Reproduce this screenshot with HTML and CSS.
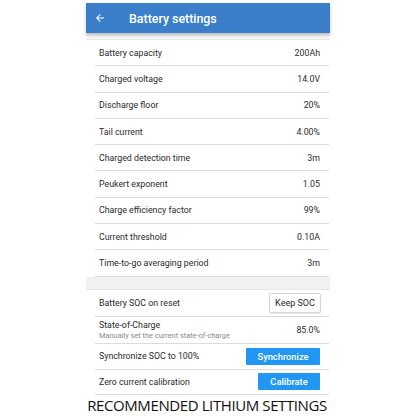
FILE: index.html
```html
<!DOCTYPE html>
<html>
<head>
<meta charset="utf-8">
<link rel="stylesheet" href="styles.css">
</head>
<body>
<div class="phone">
  <header class="appbar">
    <svg class="back" width="12" height="12" viewBox="0 0 24 24"><path d="M20 11H7.83l5.59-5.59L12 4l-8 8 8 8 1.41-1.41L7.83 13H20v-2z" fill="#fff"/></svg>
    <span class="title">Battery settings</span>
  </header>
  <div class="gap-top"></div>
  <div class="list">
    <div class="row"><span>Battery capacity</span><span>200Ah</span></div>
    <div class="row"><span>Charged voltage</span><span>14.0V</span></div>
    <div class="row"><span>Discharge floor</span><span>20%</span></div>
    <div class="row"><span>Tail current</span><span>4.00%</span></div>
    <div class="row"><span>Charged detection time</span><span>3m</span></div>
    <div class="row"><span>Peukert exponent</span><span>1.05</span></div>
    <div class="row"><span>Charge efficiency factor</span><span>99%</span></div>
    <div class="row"><span>Current threshold</span><span>0.10A</span></div>
    <div class="row"><span>Time-to-go averaging period</span><span>3m</span></div>
  </div>
  <div class="band"></div>
  <div class="list">
    <div class="row r-soc"><span>Battery SOC on reset</span><span class="btn-outline">Keep SOC</span></div>
    <div class="row r-state">
      <div class="two"><span>State-of-Charge</span><span class="sub">Manually set the current state-of-charge</span></div>
      <span>85.0%</span>
    </div>
    <div class="row r-sync"><span>Synchronize SOC to 100%</span><span class="btn-blue sync">Synchronize</span></div>
    <div class="row r-cal"><span>Zero current calibration</span><span class="btn-blue cal">Calibrate</span></div>
  </div>
</div>
<div class="caption">RECOMMENDED LITHIUM SETTINGS</div>
</body>
</html>
```
FILE: styles.css
```css
* { box-sizing: border-box; }
body {
  margin: 0;
  background: #fff;
  font-family: Roboto, "Noto Sans", sans-serif;
  color: #2a2a2a;
}
.phone {
  width: 244px;
  margin-left: 86px;
  margin-top: 3px;
}
.appbar {
  height: 30px;
  background: #3b7fca;
  display: flex;
  align-items: center;
  padding-left: 8px;
  box-shadow: 0 2px 3px rgba(0,0,0,0.25);
  position: relative;
}
.back { margin-right: 23px; }
.title {
  color: #fff;
  font-size: 12.4px;
  font-weight: 500;
}
.gap-top {
  height: 7px;
  background: #f6f6f6;
  border-bottom: 1px solid #e8e8e8;
}
.list { display: flex; flex-direction: column; }
.row {
  margin: 0 1px 0 9px;
  height: 26.3px;
  border-bottom: 1px solid #dcdcdc;
  display: flex;
  align-items: center;
  justify-content: space-between;
  padding: 0 9px 0 4px;
  font-size: 8.8px;
}
.band {
  height: 13px;
  background: #f1f1f1;
  border-bottom: 1px solid #e6e6e6;
}
.r-soc { height: 27px; }
.r-state { height: 27px; }
.r-sync { height: 26px; }
.r-cal { height: 25.5px; }
.two { display: flex; flex-direction: column; }
.sub { font-size: 7.4px; color: #8a8a8a; margin-top: 1px; }
.btn-outline {
  width: 52px;
  height: 20px;
  border: 1px solid #d6d6d6;
  border-radius: 2px;
  box-shadow: 0 1px 1px rgba(0,0,0,0.12);
  display: flex;
  align-items: center;
  justify-content: center;
  margin-right: -1px;
  font-size: 9px;
}
.btn-blue {
  height: 17px;
  background: #2196f3;
  color: #fff;
  display: flex;
  align-items: center;
  justify-content: center;
  font-size: 9.3px;
  font-weight: 500;
  border-radius: 1px;
}
.sync { width: 74px; }
.cal { width: 62px; }
.caption {
  text-align: center;
  font-family: "Open Sans", sans-serif;
  font-size: 15px;
  letter-spacing: -0.4px;
  line-height: 20px;
  color: #111;
  margin-left: -2px;
}
```
